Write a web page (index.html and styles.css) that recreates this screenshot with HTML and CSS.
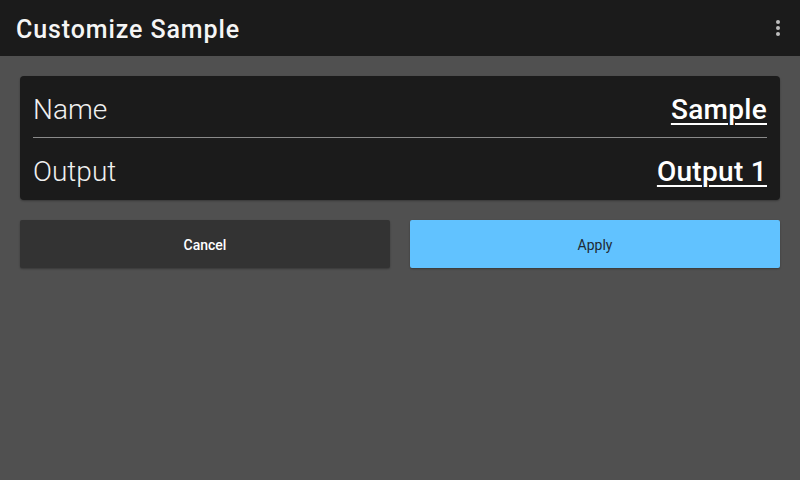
FILE: index.html
```html
<!DOCTYPE html>
<html lang="en">
<head>
    <meta charset="UTF-8">
    <title>Customize Sample</title>
    <link rel="stylesheet" href="styles.css">
</head>
<body>
    <div class="toolbar">
        <div class="toolbar-title">Customize Sample</div>
        <svg class="overflow" width="6" height="18" viewBox="0 0 6 18">
            <circle cx="3" cy="3" r="2" fill="#bdbdbd"/>
            <circle cx="3" cy="9" r="2" fill="#bdbdbd"/>
            <circle cx="3" cy="15" r="2" fill="#bdbdbd"/>
        </svg>
    </div>

    <div class="content">
        <div class="card">
            <div class="row">
                <span class="label">Name</span>
                <span class="value">Sample</span>
            </div>
            <div class="row">
                <span class="label">Output</span>
                <span class="value">Output 1</span>
            </div>
        </div>

        <div class="actions">
            <button class="btn cancel">Cancel</button>
            <button class="btn apply">Apply</button>
        </div>
    </div>
</body>
</html>
```

FILE: styles.css
```css
body {
    margin: 0;
    width: 800px;
    height: 480px;
    background-color: #505050;
    font-family: Roboto, 'Liberation Sans', sans-serif;
    color: #ffffff;
    overflow: hidden;
}

.toolbar {
    height: 56px;
    background-color: #1b1b1b;
    display: flex;
    align-items: center;
    justify-content: space-between;
    padding: 0 19px 0 16px;
}

.toolbar-title {
    font-size: 25px;
    font-weight: 500;
    letter-spacing: 0.9px;
    color: #f5f5f5;
    margin-top: 2px;
}

.overflow {
    display: block;
}

.content {
    padding: 20px;
}

.card {
    background-color: #1b1b1b;
    border-radius: 4px;
    padding: 0 13px;
    box-shadow: 0 1px 2px rgba(0, 0, 0, 0.3);
}

.row {
    height: 62px;
    display: flex;
    align-items: center;
    justify-content: space-between;
    font-size: 28px;
    padding-top: 5px;
    box-sizing: border-box;
}

.row:first-child {
    border-bottom: 1px solid #8a8a8a;
}

.label {
    font-weight: 300;
    color: #f0f0f0;
}

.value {
    font-weight: 500;
    letter-spacing: 0.3px;
    text-decoration: underline;
    text-underline-offset: 4px;
    text-decoration-thickness: 2px;
}

.actions {
    display: grid;
    grid-template-columns: 1fr 1fr;
    gap: 20px;
    margin-top: 20px;
}

.btn {
    height: 48px;
    border: none;
    border-radius: 2px;
    font-family: Roboto, 'Liberation Sans', sans-serif;
    font-size: 14px;
    box-shadow: 0 1px 2px rgba(0, 0, 0, 0.3);
    padding-top: 2px;
}

.cancel {
    background-color: #333333;
    color: #ffffff;
    font-weight: 500;
}

.apply {
    background-color: #61c2ff;
    color: #1f2a33;
    font-weight: 400;
}
```
